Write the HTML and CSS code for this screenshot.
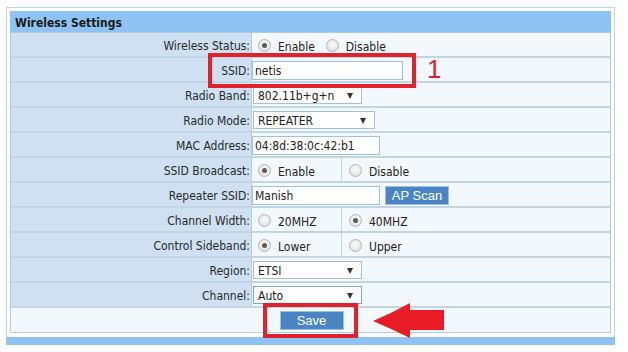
FILE: index.html
```html
<!DOCTYPE html>
<html>
<head>
<meta charset="utf-8">
<title>Wireless Settings</title>
<link rel="stylesheet" href="styles.css">
</head>
<body>
<div class="page">
  <div class="frame">
    <div class="title">Wireless Settings</div>
    <div class="form">
      <div class="row">
        <div class="label">Wireless Status:</div>
        <div class="value">
          <span class="opt"><span class="radio on"></span><span class="otext">Enable</span></span>
          <span class="opt opt-wide"><span class="radio"></span><span class="otext">Disable</span></span>
        </div>
      </div>
      <div class="row">
        <div class="label">SSID:</div>
        <div class="value"><span class="text w151">netis</span></div>
      </div>
      <div class="row">
        <div class="label">Radio Band:</div>
        <div class="value"><span class="select w109"><span>802.11b+g+n</span><span class="caret"></span></span></div>
      </div>
      <div class="row">
        <div class="label">Radio Mode:</div>
        <div class="value"><span class="select w122"><span>REPEATER</span><span class="caret"></span></span></div>
      </div>
      <div class="row">
        <div class="label">MAC Address:</div>
        <div class="value"><span class="text w128">04:8d:38:0c:42:b1</span></div>
      </div>
      <div class="row three">
        <div class="label">SSID Broadcast:</div>
        <div class="value split"><span class="opt"><span class="radio on"></span><span class="otext">Enable</span></span></div>
        <div class="value"><span class="opt opt-third"><span class="radio"></span><span class="otext">Disable</span></span></div>
      </div>
      <div class="row">
        <div class="label">Repeater SSID:</div>
        <div class="value"><span class="text w128">Manish</span><span class="btn scan">AP Scan</span></div>
      </div>
      <div class="row three">
        <div class="label">Channel Width:</div>
        <div class="value split"><span class="opt"><span class="radio"></span><span class="otext">20MHZ</span></span></div>
        <div class="value"><span class="opt opt-third"><span class="radio on"></span><span class="otext">40MHZ</span></span></div>
      </div>
      <div class="row three">
        <div class="label">Control Sideband:</div>
        <div class="value split"><span class="opt"><span class="radio on"></span><span class="otext">Lower</span></span></div>
        <div class="value"><span class="opt opt-third"><span class="radio"></span><span class="otext">Upper</span></span></div>
      </div>
      <div class="row">
        <div class="label">Region:</div>
        <div class="value"><span class="select w109"><span>ETSI</span><span class="caret"></span></span></div>
      </div>
      <div class="row">
        <div class="label">Channel:</div>
        <div class="value"><span class="select w109 focus"><span>Auto</span><span class="caret"></span></span></div>
      </div>
      <div class="row last">
        <div class="value center"><span class="btn save">Save</span></div>
      </div>
    </div>
    <div class="bar"></div>
  </div>

  <svg class="annot" width="628" height="352" viewBox="0 0 628 352">
    <rect x="210" y="55" width="204" height="31" fill="none" stroke="#e3212b" stroke-width="4"/>
    <rect x="265" y="305" width="91" height="31" fill="none" stroke="#e3212b" stroke-width="4"/>
    <path d="M373 321 Q392 313 410 303 L410 310 L444 310 L444 330 L410 330 L410 338 Q392 329 373 321 Z" fill="#e81c24"/>
  </svg>
  <span class="num">1</span>
</div>
</body>
</html>
```

FILE: styles.css
```css
html, body {
  margin: 0;
  padding: 0;
  background: #ffffff;
}

.page {
  position: relative;
  width: 628px;
  height: 352px;
  padding: 7px 0 0 6px;
  box-sizing: border-box;
  font-family: "DejaVu Sans Condensed", "Liberation Sans", sans-serif;
  font-stretch: condensed;
  font-size: 12px;
  color: #222222;
}

.frame {
  width: 609px;
  box-sizing: border-box;
  border: 1px solid #b7d7e3;
  border-bottom: none;
  padding: 3px 3px 0 3px;
}

.title {
  height: 19px;
  padding-top: 2px;
  background: #8fc3f3;
  font-weight: bold;
  font-size: 12px;
  line-height: 21px;
  padding-left: 5px;
  color: #1a1a1a;
}

.form {
  border: 1px solid #b3cbdc;
}

.row {
  display: grid;
  grid-template-columns: 241px 1fr;
  height: 25px;
  box-sizing: border-box;
  border-bottom: 2px solid #c2d5e5;
}

.row.three {
  grid-template-columns: 241px 90px 1fr;
}

.row.last {
  grid-template-columns: 1fr;
  height: 24px;
  border-bottom: none;
}

.label {
  background: #cee0f1;
  border-right: 1px solid #b6cde0;
  display: flex;
  align-items: center;
  justify-content: flex-end;
  padding: 2px 1px 0 0;
  color: #2a2a2a;
}

.value {
  background: #f3f8fc;
  display: flex;
  align-items: center;
  padding-top: 1px;
}

.value.split {
  border-right: 1px solid #c2d5e5;
}

.value.center {
  justify-content: center;
  padding-top: 0;
}

.opt {
  display: flex;
  align-items: center;
  margin-left: 6px;
}

.opt.opt-wide {
  margin-left: 11px;
}

.opt.opt-third {
  margin-left: 7px;
}

.radio {
  width: 13px;
  height: 13px;
  box-sizing: border-box;
  border-radius: 50%;
  border: 1px solid #b4b4b4;
  background: radial-gradient(circle at 50% 40%, #fbfbfb 0%, #e6e6e6 70%, #d4d4d4 100%);
  margin-right: 7px;
  position: relative;
}

.radio.on::after {
  content: "";
  position: absolute;
  left: 3px;
  top: 3px;
  width: 5px;
  height: 5px;
  border-radius: 50%;
  background: #5a5a5a;
}

.otext {
  padding-top: 3px;
}

.text {
  display: flex;
  align-items: center;
  height: 19px;
  box-sizing: border-box;
  border: 1px solid #9cc3df;
  background: #ffffff;
  padding: 1px 0 0 2px;
}

.select {
  display: flex;
  align-items: center;
  justify-content: space-between;
  height: 18px;
  box-sizing: border-box;
  margin-left: 1px;
  border: 1px solid #a9c0d3;
  background: #ffffff;
  padding: 1px 8px 0 4px;
}

.select.focus {
  border-color: #7ea6d3;
}

.caret {
  width: 0;
  height: 0;
  border-left: 3px solid transparent;
  border-right: 3px solid transparent;
  border-top: 6px solid #333333;
}

.w151 { width: 151px; }
.w128 { width: 128px; }
.w122 { width: 122px; }
.w109 { width: 109px; }

.btn {
  display: flex;
  align-items: center;
  justify-content: center;
  height: 19px;
  box-sizing: border-box;
  background: #4b84c4;
  border: 1px solid #9ebfe4;
  color: #ffffff;
  font-family: "Liberation Sans", sans-serif;
  font-stretch: normal;
  font-size: 13px;
}

.btn.scan {
  width: 64px;
  margin-left: 5px;
}

.btn.save {
  width: 64px;
  margin-left: 2px;
}

.bar {
  height: 8px;
  margin: 4px -4px 0 -4px;
  background: #8fc3f3;
}

.annot {
  position: absolute;
  left: 0;
  top: 0;
}

.num {
  position: absolute;
  left: 427px;
  top: 56px;
  font-family: "Liberation Sans", sans-serif;
  font-stretch: normal;
  font-size: 26px;
  line-height: 26px;
  color: #e3212b;
}
```
